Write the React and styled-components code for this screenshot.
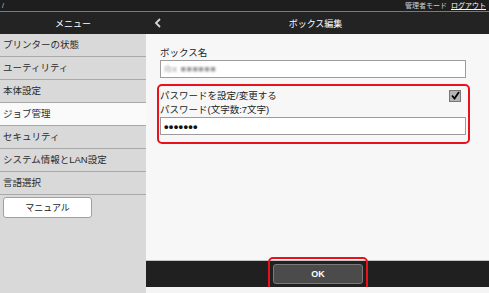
import React from 'react';
import styled, { createGlobalStyle } from 'styled-components';

const GlobalStyle = createGlobalStyle`
  html, body {
    margin: 0;
    padding: 0;
    background: #f7f7f7;
  }
  body {
    font-family: "Liberation Sans", "Noto Sans CJK JP", sans-serif;
  }
`;

const Page = styled.div`
  width: 489px;
  height: 293px;
  display: flex;
  flex-direction: column;
  overflow: hidden;
`;

const TopStrip = styled.div`
  height: 11px;
  background: #1e1e1e;
  border-bottom: 1px solid #7a7a7a;
  display: flex;
  align-items: center;
  justify-content: space-between;
  padding: 0 3px 0 2px;
  font-size: 7px;
  color: #cfcfcf;
  line-height: 1;
`;

const AdminLinks = styled.div`
  display: flex;
  gap: 4px;
  a {
    color: #fff;
    text-decoration: underline;
  }
`;

const Header = styled.div`
  height: 22px;
  background: #232323;
  display: flex;
  align-items: center;
  color: #fff;
  font-size: 9px;
`;

const MenuTitle = styled.div`
  width: 146px;
  text-align: center;
`;

const PageTitle = styled.div`
  flex: 1;
  display: flex;
  align-items: center;
  position: relative;
  justify-content: center;
  padding-right: 4px;
`;

const BackIcon = styled.svg`
  position: absolute;
  left: 8px;
  top: 50%;
  transform: translateY(-50%);
`;

const Body = styled.div`
  flex: 1;
  display: flex;
`;

const Sidebar = styled.nav`
  width: 146px;
  background: #d9d9d9;
  display: flex;
  flex-direction: column;
`;

const MenuItem = styled.div`
  box-sizing: border-box;
  height: 23px;
  border-bottom: 1px solid #a9a9a9;
  background: ${({ active }) => (active ? '#fafafa' : 'transparent')};
  display: flex;
  align-items: center;
  padding: 0 0 3px 3px;
  font-size: 9.5px;
  color: #2a2a2a;
`;

const ManualButton = styled.button`
  margin: 2px 0 0 3px;
  width: 89px;
  height: 21px;
  background: #fff;
  border: 1px solid #a0a0a0;
  border-radius: 3px;
  font-family: inherit;
  font-size: 9px;
  color: #222;
  padding: 0;
`;

const Main = styled.main`
  flex: 1;
  display: flex;
  flex-direction: column;
  background: #f7f7f7;
`;

const Content = styled.div`
  flex: 1;
  padding: 12px 23px 0 14px;
  display: flex;
  flex-direction: column;
`;

const Label = styled.div`
  font-size: 9.5px;
  color: #222;
  height: 13px;
  line-height: 13px;
`;

const TextBox = styled.div`
  height: 16px;
  border: 1px solid #9c9c9c;
  background: #fff;
  display: flex;
  align-items: center;
  padding-left: 3px;
  margin-top: 1px;
  font-size: 9px;
`;

const Blurred = styled.span`
  color: #9a9a9a;
  filter: blur(1.2px);
  letter-spacing: 0.5px;
`;

const Dots = styled.span`
  font-weight: bold;
  color: #111;
  font-size: 13px;
  letter-spacing: 0.3px;
`;

const Highlight = styled.div`
  margin: 6px -4px 0 -3px;
  border: 2px solid #e8121d;
  border-radius: 5px;
  padding: 2px 2px 7px 1px;
`;

const CheckRow = styled.div`
  display: flex;
  justify-content: space-between;
  align-items: center;
  height: 15px;
  padding-right: 5px;
`;

const CheckBox = styled.div`
  width: 10px;
  height: 10px;
  background: #b5b5b5;
  border: 1px solid #777;
  display: flex;
  align-items: center;
  justify-content: center;
`;

const Footer = styled.div`
  height: 26px;
  background: #202020;
  border-top: 1px solid #c4c4c4;
  display: flex;
  align-items: center;
  justify-content: center;
`;

const OkFrame = styled.div`
  border: 2px solid #e8121d;
  border-radius: 5px;
  padding: 4px 3px 5px 3px;
  margin-left: 1px;
`;

const OkButton = styled.button`
  width: 90px;
  height: 20px;
  background: #4b4b4b;
  border: 1px solid #7a7a7a;
  border-radius: 3px;
  color: #fff;
  font-family: inherit;
  font-weight: bold;
  font-size: 9px;
  padding: 0;
`;

const BottomStrip = styled.div`
  height: 6px;
  background: #f4f4f4;
`;

const menu = [
  'プリンターの状態',
  'ユーティリティ',
  '本体設定',
  'ジョブ管理',
  'セキュリティ',
  'システム情報とLAN設定',
  '言語選択',
];

export default function App() {
  return (
    <Page>
      <GlobalStyle />
      <TopStrip>
        <span>/</span>
        <AdminLinks>
          <span>管理者モード</span>
          <a>ログアウト</a>
        </AdminLinks>
      </TopStrip>
      <Header>
        <MenuTitle>メニュー</MenuTitle>
        <PageTitle>
          <BackIcon width="8" height="10" viewBox="0 0 8 10">
            <path d="M6 1 L2 5 L6 9" fill="none" stroke="#d8d8d8" strokeWidth="1.8" />
          </BackIcon>
          ボックス編集
        </PageTitle>
      </Header>
      <Body>
        <Sidebar>
          {menu.map((m) => (
            <MenuItem key={m} active={m === 'ジョブ管理'}>{m}</MenuItem>
          ))}
          <ManualButton>マニュアル</ManualButton>
        </Sidebar>
        <Main>
          <Content>
            <Label>ボックス名</Label>
            <TextBox><Blurred>Ibx ■■■■■■</Blurred></TextBox>
            <Highlight>
              <CheckRow>
                <Label>パスワードを設定/変更する</Label>
                <CheckBox>
                  <svg width="9" height="9" viewBox="0 0 9 9">
                    <path d="M1 4.5 L3.5 7.5 L8 1" fill="none" stroke="#000" strokeWidth="1.8" />
                  </svg>
                </CheckBox>
              </CheckRow>
              <Label>パスワード(文字数:7文字)</Label>
              <TextBox><Dots>•••••••</Dots></TextBox>
            </Highlight>
          </Content>
          <Footer>
            <OkFrame>
              <OkButton>OK</OkButton>
            </OkFrame>
          </Footer>
          <BottomStrip />
        </Main>
      </Body>
    </Page>
  );
}
